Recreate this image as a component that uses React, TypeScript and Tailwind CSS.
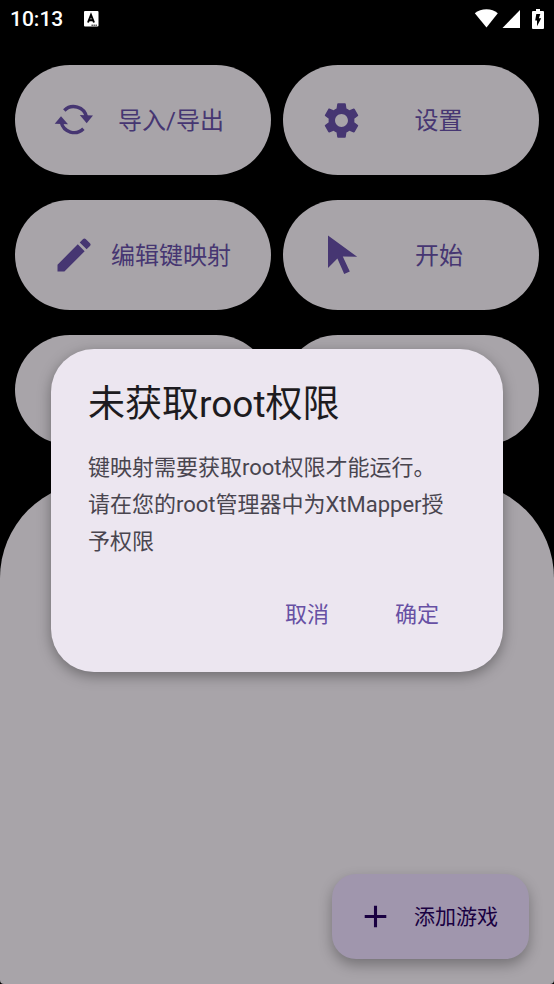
import type { ReactNode } from "react";
import { MdAdd, MdEdit, MdSettings } from "react-icons/md";

interface MenuCardProps {
  icon: ReactNode;
  label: string;
}

const SyncIcon = () => (
  <svg width="44" height="44" viewBox="0 0 44 44" fill="none" aria-hidden="true">
    <path d="M12.3 12.5A13.2 13.2 0 0 1 34.5 19" stroke="currentColor" strokeWidth="3.4" />
    <path d="M31.4 30.7A13.2 13.2 0 0 1 9.2 24.2" stroke="currentColor" strokeWidth="3.4" />
    <path d="M27.8 17 41 17.5 34.7 25.2Z" fill="currentColor" />
    <path d="M16 26.3 2.7 25.7 9 18.2Z" fill="currentColor" />
  </svg>
);

const CursorIcon = () => (
  <svg width="44" height="44" viewBox="0 0 44 44" fill="currentColor" aria-hidden="true">
    <path d="M8 2.5 37.2 23.8 22.8 23.6 29.8 38.4 24.2 41 17.4 25.6 8 35Z" />
  </svg>
);

const MenuCard = ({ icon, label }: MenuCardProps) => (
  <button className="flex h-[110px] items-center rounded-full bg-[#a8a4a9] pl-[37px] pr-[25px] text-[#463672]">
    {icon}
    <span className="flex-1 pt-0.5 text-center text-2xl">{label}</span>
  </button>
);

const StatusBar = () => (
  <div className="flex h-[37px] items-center justify-between px-[10px] text-white">
    <div className="flex items-center gap-5">
      <span className="pt-0.5 text-[21px] font-medium">10:13</span>
      <svg width="16" height="16" viewBox="0 0 16 16" aria-hidden="true">
        <rect x="1" width="14.5" height="15.5" rx="1" fill="#fff" />
        <path d="M5 11.5 8 4l3 7.5M6 9.2h4" stroke="#000" strokeWidth="2" fill="none" />
        <path d="M8.5 14.2h6" stroke="#000" strokeWidth="1" strokeDasharray="1.4 0.6" />
      </svg>
    </div>
    <div className="flex items-center">
      <svg width="24" height="20" viewBox="0 0 24 20" fill="#fff" aria-hidden="true">
        <path d="M12.5 18.5.8 4.2C3.9 1.6 8.1.2 12.5.2s8.2 1.4 11.3 4Z" />
      </svg>
      <svg className="ml-1" width="18" height="20" viewBox="0 0 18 20" fill="#fff" aria-hidden="true">
        <path d="M18 1v18H.5Z" />
      </svg>
      <svg className="ml-3" width="12" height="20" viewBox="0 0 12 20" aria-hidden="true">
        <path d="M4 0h4v2h3a1 1 0 0 1 1 1v16a1 1 0 0 1-1 1H1a1 1 0 0 1-1-1V3a1 1 0 0 1 1-1h3Z" fill="#fff" />
        <path d="M4.3 5h4L6.9 9.3h2.3L5 17.2v-5.6H3.2Z" fill="#000" />
      </svg>
    </div>
  </div>
);

const RootDialog = () => (
  <div className="absolute inset-0 flex items-center justify-center px-[51px] pt-[37px]">
    <div
      role="dialog"
      aria-labelledby="root-dialog-title"
      className="w-full rounded-[43px] bg-[#ece6f0] pb-[34px] pl-[37px] pr-[42px] pt-8 shadow-[0_4px_14px_rgba(0,0,0,0.35)]"
    >
      <h2 id="root-dialog-title" className="text-[37px] leading-[48px] text-[#1d1b20]">
        未获取root权限
      </h2>
      <p className="mt-5 text-[22px] leading-[37px] text-[#49454f]">
        键映射需要获取root权限才能运行。
        <br />
        请在您的root管理器中为XtMapper授予权限
      </p>
      <div className="mt-[30px] flex justify-end gap-[22px] text-[22px] text-[#6750a4]">
        <button className="h-12 rounded-full px-[22px]">取消</button>
        <button className="h-12 rounded-full px-[22px]">确定</button>
      </div>
    </div>
  </div>
);

export default function App() {
  return (
    <div className="relative flex min-h-screen flex-col bg-black font-['Roboto','Noto_Sans_CJK_SC',sans-serif]">
      <StatusBar />

      <div className="grid grid-cols-2 gap-x-3 gap-y-[25px] px-[15px] pt-7">
        <MenuCard icon={<SyncIcon />} label="导入/导出" />
        <MenuCard icon={<MdSettings size={43} />} label="设置" />
        <MenuCard icon={<MdEdit size={44} />} label="编辑键映射" />
        <MenuCard icon={<CursorIcon />} label="开始" />
        <div className="h-[110px] rounded-full bg-[#a8a4a9]" />
        <div className="h-[110px] rounded-full bg-[#a8a4a9]" />
      </div>

      {/* Game list */}
      <main className="mt-[37px] flex flex-1 items-end justify-end rounded-b-sm rounded-t-[96px] bg-[#a8a4a9] p-[25px]">
        <button className="flex h-[85px] items-center gap-5 rounded-[24px] bg-[#a096ad] pl-[25px] pr-[31px] text-[21px] text-[#190041] shadow-[0_6px_14px_rgba(0,0,0,0.3)]">
          <MdAdd size={37} />
          <span className="pt-0.5">添加游戏</span>
        </button>
      </main>

      <RootDialog />
    </div>
  );
}
